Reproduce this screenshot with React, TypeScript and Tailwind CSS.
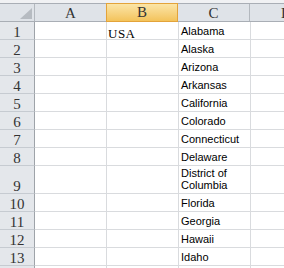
import React from "react";

const rows: { n: number; b?: string; c?: string[]; h: number }[] = [
  { n: 1, b: "USA", c: ["Alabama"], h: 18 },
  { n: 2, c: ["Alaska"], h: 18 },
  { n: 3, c: ["Arizona"], h: 18 },
  { n: 4, c: ["Arkansas"], h: 18 },
  { n: 5, c: ["California"], h: 18 },
  { n: 6, c: ["Colorado"], h: 18 },
  { n: 7, c: ["Connecticut"], h: 18 },
  { n: 8, c: ["Delaware"], h: 18 },
  { n: 9, c: ["District of", "Columbia"], h: 28 },
  { n: 10, c: ["Florida"], h: 18 },
  { n: 11, c: ["Georgia"], h: 18 },
  { n: 12, c: ["Hawaii"], h: 18 },
  { n: 13, c: ["Idaho"], h: 18 },
  { n: 14, h: 18 },
];

export default function App() {
  return (
    <div className="w-[284px] h-[268px] overflow-hidden bg-white">
      <div className="h-[3px] bg-[#f0f1f3]" />
      <div className="flex h-[19px] border-t border-b border-[#a9aeb5] bg-[#dfe3e8] text-[15px] text-[#333333] font-['Liberation_Serif',serif]">
        <div className="relative w-[35px] shrink-0 border-r border-[#b3b8be]">
          <svg className="absolute right-[2px] bottom-[2px]" width="12" height="11" viewBox="0 0 12 11">
            <polygon points="12,0 12,11 0,11" fill="#b6bbc1" />
          </svg>
        </div>
        <div className="w-[72px] shrink-0 border-r border-[#b3b8be] flex items-end justify-center leading-[14px] pb-[1px]">
          A
        </div>
        <div className="w-[72px] shrink-0 -mt-px -mb-px -ml-px border border-[#e3a33a] bg-gradient-to-b from-[#fbe5a6] to-[#f3c35a] flex items-end justify-center leading-[14px] pb-[2px] pt-px">
          B
        </div>
        <div className="w-[72px] shrink-0 border-r border-[#b3b8be] flex items-end justify-center leading-[14px] pb-[1px]">
          C
        </div>
        <div className="flex-1 overflow-hidden relative">
          <span className="absolute left-[31px] bottom-[1px] leading-[14px]">D</span>
        </div>
      </div>
      {rows.map((r) => (
        <div key={r.n} className="flex border-b border-[#d9dbde]" style={{ height: r.h }}>
          <div className="w-[35px] shrink-0 -mb-px border-b border-r border-[#9ea3a9] border-b-[#c6cbd1] bg-[#e4e7eb] flex items-end justify-center text-[15px] leading-[11px] pb-[1px] text-[#333333] font-['Liberation_Serif',serif]">
            {r.n <= 13 ? r.n : ""}
          </div>
          <div className="w-[72px] shrink-0 border-r border-[#d9dbde]" />
          <div className="w-[72px] shrink-0 border-r border-[#d9dbde] flex items-end pl-[1px] text-[13px] tracking-[0.5px] leading-[10px] text-black font-['Liberation_Serif',serif]">
            {r.b}
          </div>
          <div className="w-[72px] shrink-0 border-r border-[#d9dbde] flex flex-col justify-end pl-[2px] pb-[2px] text-[11px] leading-[12px] text-black font-['Liberation_Sans',Arial,sans-serif]">
            {r.c?.map((t) => (
              <div key={t} className="whitespace-nowrap">
                {t}
              </div>
            ))}
          </div>
          <div className="flex-1" />
        </div>
      ))}
    </div>
  );
}
